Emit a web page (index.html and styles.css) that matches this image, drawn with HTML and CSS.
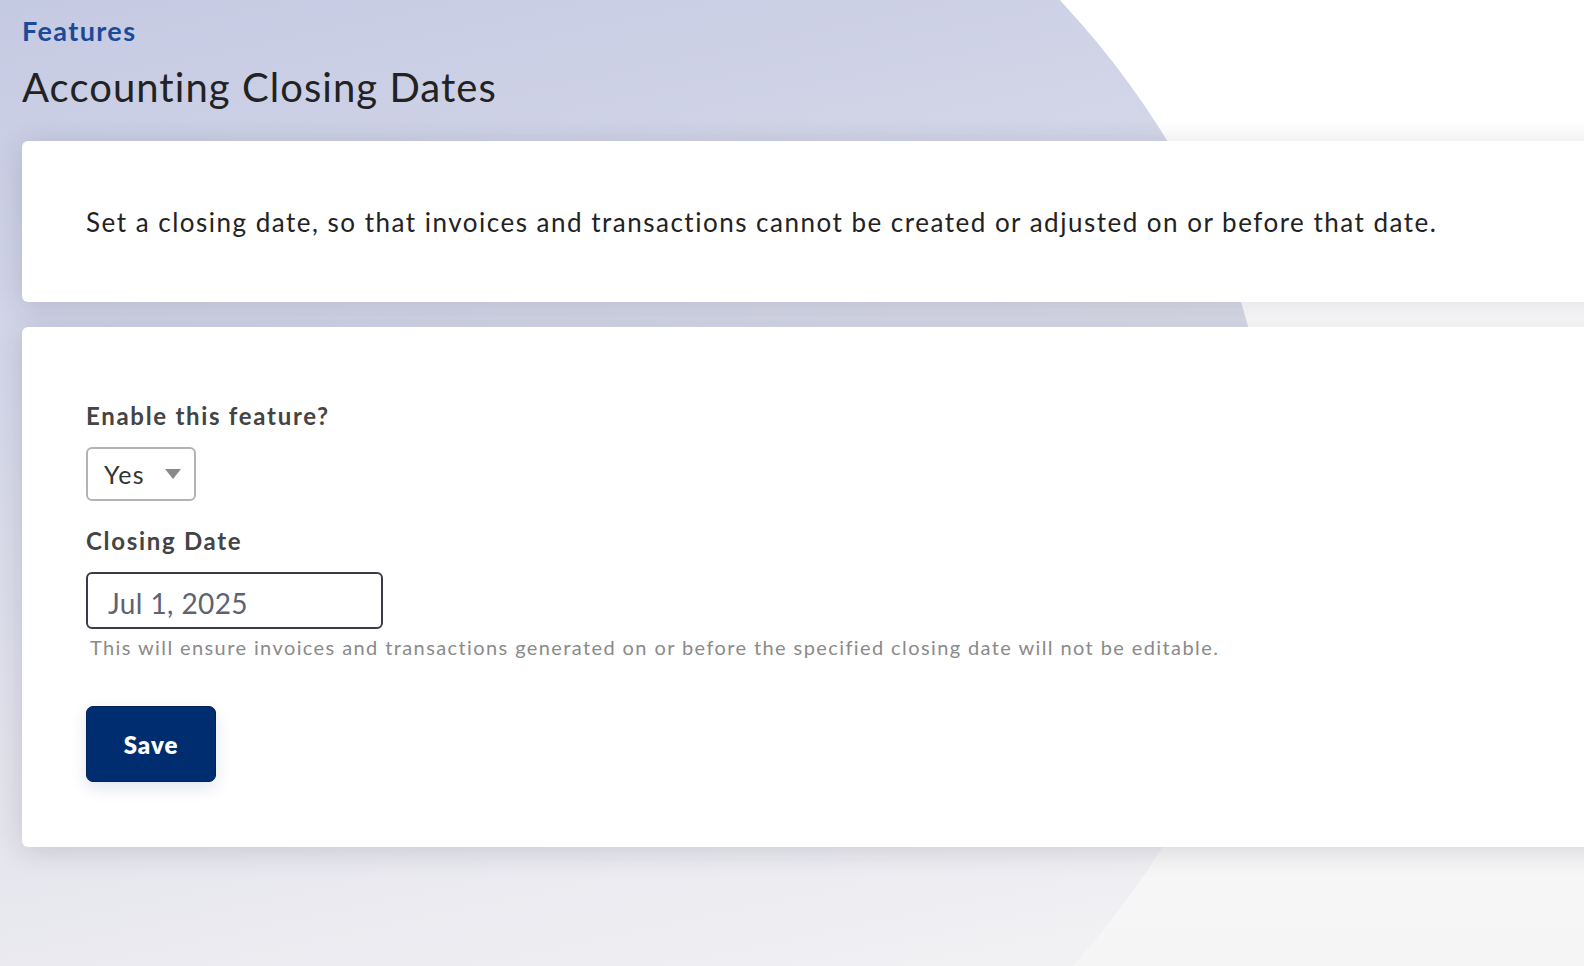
FILE: index.html
```html
<!DOCTYPE html>
<html lang="en">
<head>
<meta charset="utf-8">
<title>Accounting Closing Dates</title>
<link rel="stylesheet" href="styles.css">
</head>
<body>
<div class="bg-shape"></div>
<main class="page">
  <header class="page-header">
    <a class="crumb" href="#">Features</a>
    <h1 class="title">Accounting Closing Dates</h1>
  </header>
  <section class="card intro">
    <p class="intro-text">Set a closing date, so that invoices and transactions cannot be created or adjusted on or before that date.</p>
  </section>
  <section class="card form-card">
    <form class="form">
      <div class="field">
        <label class="label">Enable this feature?</label>
        <div class="select">
          <span class="select-value">Yes</span>
          <span class="caret"></span>
        </div>
      </div>
      <div class="field">
        <label class="label" for="closing">Closing Date</label>
        <input id="closing" class="date-input" type="text" value="Jul 1, 2025">
        <p class="help">This will ensure invoices and transactions generated on or before the specified closing date will not be editable.</p>
      </div>
      <div class="actions">
        <button type="button" class="btn-save">Save</button>
      </div>
    </form>
  </section>
</main>
</body>
</html>
```
FILE: styles.css
```css
html, body {
  margin: 0;
  padding: 0;
  height: 100%;
}
body {
  position: relative;
  overflow: hidden;
  font-family: Lato, "Open Sans", sans-serif;
  background: linear-gradient(180deg, #ffffff 0%, #ffffff 45%, #f5f5f6 100%);
  color: #222;
}
.bg-shape {
  position: absolute;
  inset: 0;
  background: linear-gradient(168deg, #c5cae3 0%, #d4d7e8 30%, #e3e3ec 60%, #f1f1f4 90%);
  clip-path: ellipse(1460px 948px at -190px 490px);
  z-index: 0;
}
.page {
  position: relative;
  z-index: 1;
  padding: 14px 0 0 22px;
  margin-right: -40px;
}
.page-header {
  display: flex;
  flex-direction: column;
}
.crumb {
  color: #1b4a99;
  font-weight: 700;
  font-size: 27px;
  letter-spacing: 1.4px;
  text-decoration: none;
  line-height: 34px;
}
.title {
  margin: 15px 0 0 0;
  font-weight: 400;
  font-size: 40px;
  letter-spacing: 1.05px;
  line-height: 48px;
  color: #222;
}
.card {
  background: #fff;
  border-radius: 6px;
  box-shadow: 0 4px 28px rgba(40, 40, 60, 0.16);
}
.intro {
  margin-top: 30px;
  height: 161px;
  box-sizing: border-box;
  padding: 0 0 0 64px;
  display: flex;
  align-items: center;
}
.intro-text {
  margin: 0;
  font-size: 26px;
  letter-spacing: 1.5px;
  color: #222;
}
.form-card {
  margin-top: 25px;
  height: 520px;
  box-sizing: border-box;
  padding: 71px 0 0 64px;
}
.form {
  display: flex;
  flex-direction: column;
}
.field {
  display: flex;
  flex-direction: column;
  align-items: flex-start;
}
.label {
  font-weight: 700;
  font-size: 24px;
  letter-spacing: 1.7px;
  line-height: 36px;
  color: #444;
  margin-bottom: 13px;
}
.select {
  display: inline-flex;
  align-items: center;
  gap: 20px;
  width: 110px;
  height: 54px;
  box-sizing: border-box;
  border: 2px solid #b3b3b3;
  border-radius: 6px;
  padding: 0 12px 0 16px;
  font-size: 25px;
  letter-spacing: 1.4px;
  color: #333;
  margin-bottom: 22px;
}
.caret {
  width: 0;
  height: 0;
  border-left: 8px solid transparent;
  border-right: 8px solid transparent;
  border-top: 10px solid #8a8a8a;
}
.date-input {
  width: 297px;
  height: 57px;
  box-sizing: border-box;
  border: 2px solid #3b3b48;
  border-radius: 6px;
  padding: 4px 20px 0;
  font-family: inherit;
  font-size: 28px;
  letter-spacing: 0.4px;
  color: #5d6274;
  outline: none;
}
.help {
  margin: 3px 0 0 4px;
  font-size: 20px;
  letter-spacing: 1.4px;
  line-height: 30px;
  color: #8a8a8a;
}
.actions {
  margin-top: 44px;
}
.btn-save {
  width: 130px;
  height: 76px;
  border: 1px solid #00245c;
  border-radius: 7px;
  background: #002d6f;
  color: #fff;
  font-family: inherit;
  font-weight: 800;
  font-size: 24px;
  letter-spacing: 1px;
  box-shadow: 0 6px 16px rgba(0, 40, 110, 0.12);
  cursor: pointer;
}
```
